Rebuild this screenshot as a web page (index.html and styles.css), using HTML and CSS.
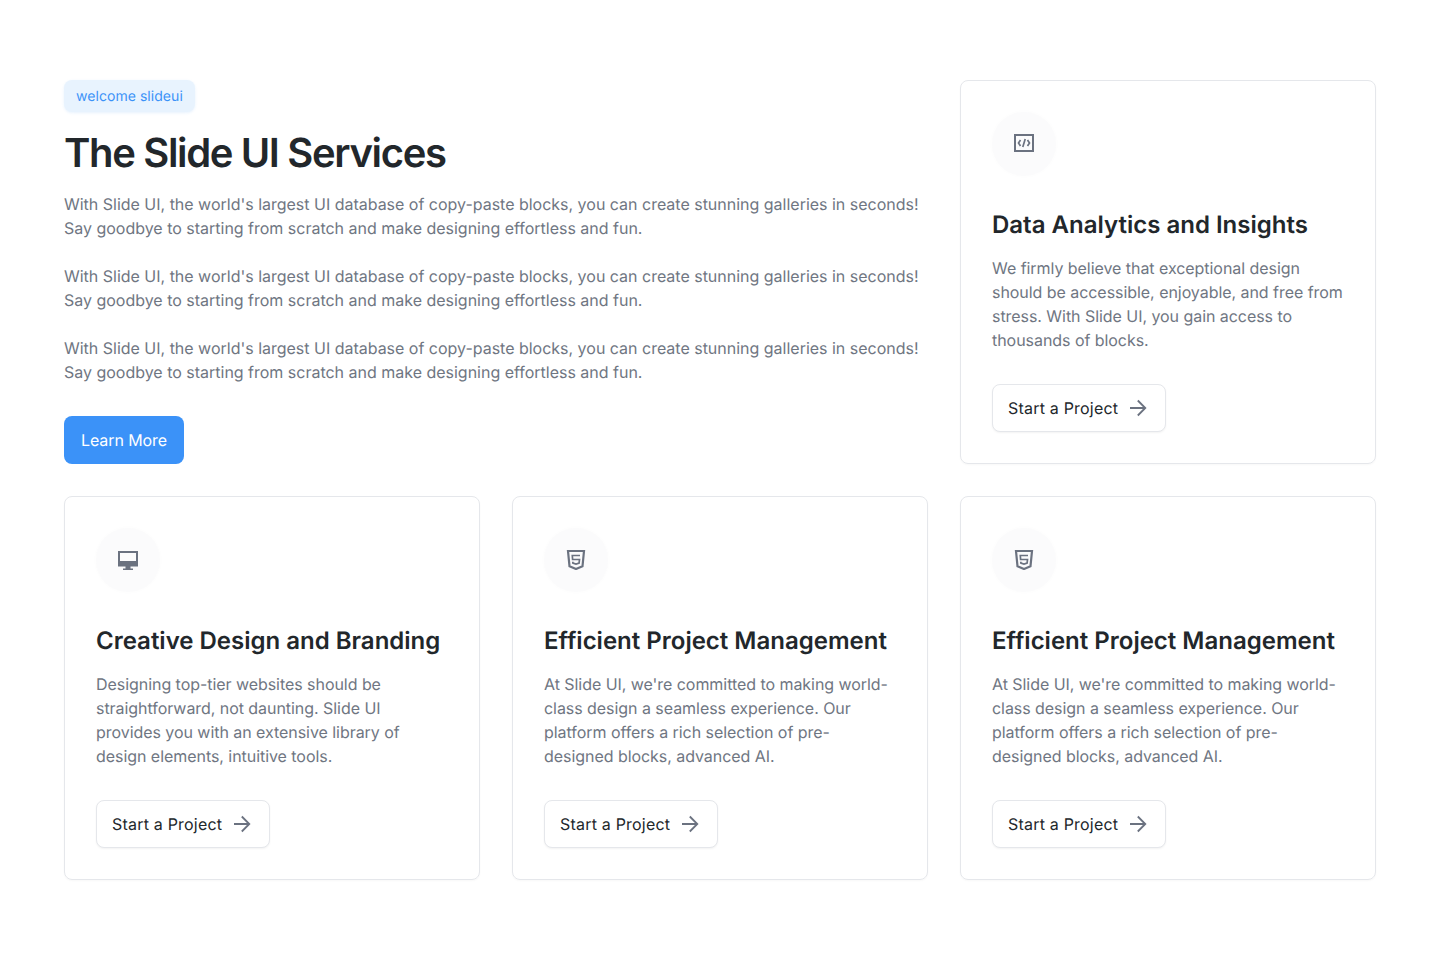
FILE: index.html
```html
<!DOCTYPE html>
<html lang="en">
<head>
    <meta charset="UTF-8">
    <meta name="viewport" content="width=device-width, initial-scale=1.0">
    <title>The Slide UI Services</title>
    <link rel="stylesheet" href="styles.css">
</head>
<body>
    <div class="services">
        <div class="intro">
            <span class="badge">welcome slideui</span>
            <h1>The Slide UI Services</h1>
            <p>With Slide UI, the world's largest UI database of copy-paste blocks, you can create stunning galleries in seconds! Say goodbye to starting from scratch and make designing effortless and fun.</p>
            <p>With Slide UI, the world's largest UI database of copy-paste blocks, you can create stunning galleries in seconds! Say goodbye to starting from scratch and make designing effortless and fun.</p>
            <p>With Slide UI, the world's largest UI database of copy-paste blocks, you can create stunning galleries in seconds! Say goodbye to starting from scratch and make designing effortless and fun.</p>
            <a href="#" class="btn-primary">Learn More</a>
        </div>

        <div class="card">
            <div class="card-icon">
                <svg width="20" height="20" viewBox="0 0 20 20" fill="none">
                    <rect x="1" y="1" width="18" height="16" stroke="#6b7280" stroke-width="2"/>
                    <path d="M6.500 6 4.500 9l2 3M13.500 6l2 3-2 3M11.200 5l-2.400 8" stroke="#6b7280" stroke-width="1.700"/>
                </svg>
            </div>
            <h2>Data Analytics and Insights</h2>
            <p>We firmly believe that exceptional design should be accessible, enjoyable, and free from stress. With Slide UI, you gain access to thousands of blocks.</p>
            <a href="#" class="btn-outline"><span>Start a Project</span>
                <svg width="24" height="24" viewBox="0 0 24 24" fill="none"><path d="M4 12h15M11.800 4.500 19.300 12l-7.500 7.500" stroke="#6b7280" stroke-width="1.800"/></svg>
            </a>
        </div>

        <div class="card">
            <div class="card-icon">
                <svg width="20" height="20" viewBox="0 0 20 20" fill="none">
                    <path fill-rule="evenodd" clip-rule="evenodd" d="M0 1h20v15.500h-7.500v2H15V20H5v-1.500h2.500v-2H0V1Zm2 2v8h16V3H2Z" fill="#6b7280"/>
                </svg>
            </div>
            <h2>Creative Design and Branding</h2>
            <p>Designing top-tier websites should be straightforward, not daunting. Slide UI provides you with an extensive library of design elements, intuitive tools.</p>
            <a href="#" class="btn-outline"><span>Start a Project</span>
                <svg width="24" height="24" viewBox="0 0 24 24" fill="none"><path d="M4 12h15M11.800 4.500 19.300 12l-7.500 7.500" stroke="#6b7280" stroke-width="1.800"/></svg>
            </a>
        </div>

        <div class="card">
            <div class="card-icon">
                <svg width="20" height="20" viewBox="0 0 20 20" fill="none">
                    <path d="M2 1h16l-1.500 15.300L10 19l-6.500-2.700L2 1Z" stroke="#6b7280" stroke-width="2.200"/>
                    <path d="M14 5.500H6.300l.3 4h6.900l-.4 3.500L10 14l-3.100-1-.1-1.200" stroke="#6b7280" stroke-width="1.700"/>
                </svg>
            </div>
            <h2>Efficient Project Management</h2>
            <p>At Slide UI, we're committed to making world-class design a seamless experience. Our platform offers a rich selection of pre-designed blocks, advanced AI.</p>
            <a href="#" class="btn-outline"><span>Start a Project</span>
                <svg width="24" height="24" viewBox="0 0 24 24" fill="none"><path d="M4 12h15M11.800 4.500 19.300 12l-7.500 7.500" stroke="#6b7280" stroke-width="1.800"/></svg>
            </a>
        </div>

        <div class="card">
            <div class="card-icon">
                <svg width="20" height="20" viewBox="0 0 20 20" fill="none">
                    <path d="M2 1h16l-1.500 15.300L10 19l-6.500-2.700L2 1Z" stroke="#6b7280" stroke-width="2.200"/>
                    <path d="M14 5.500H6.300l.3 4h6.900l-.4 3.500L10 14l-3.100-1-.1-1.200" stroke="#6b7280" stroke-width="1.700"/>
                </svg>
            </div>
            <h2>Efficient Project Management</h2>
            <p>At Slide UI, we're committed to making world-class design a seamless experience. Our platform offers a rich selection of pre-designed blocks, advanced AI.</p>
            <a href="#" class="btn-outline"><span>Start a Project</span>
                <svg width="24" height="24" viewBox="0 0 24 24" fill="none"><path d="M4 12h15M11.800 4.500 19.300 12l-7.500 7.500" stroke="#6b7280" stroke-width="1.800"/></svg>
            </a>
        </div>
    </div>
</body>
</html>
```

FILE: styles.css
```css
body {
    font-family: Inter, "Noto Sans", sans-serif;
    margin: 0;
    background-color: white;
    text-rendering: geometricPrecision;
}
.services {
    display: grid;
    grid-template-columns: repeat(3, 1fr);
    gap: 32px;
    padding: 80px 64px;
}
.intro {
    grid-column: span 2;
    display: flex;
    flex-direction: column;
    align-items: flex-start;
}
.intro p {
    margin: 0 0 24px;
    font-size: 16px;
    line-height: 24px;
    letter-spacing: -0.01px;
    color: #6f7682;
}
.intro p:last-of-type {
    margin-bottom: 32px;
}
.badge {
    padding: 5px 12px 3px;
    font-size: 14px;
    line-height: 24px;
    letter-spacing: 0.05px;
    color: #3b92f8;
    background-color: #e8f3fe;
    border-radius: 8px;
    box-shadow: 0 1px 3px rgba(59, 146, 248, 0.12);
}
h1 {
    margin: 17px 0 15px;
    font-size: 40px;
    line-height: 48px;
    font-weight: 600;
    letter-spacing: -1.35px;
    color: #22272b;
}
.btn-primary {
    padding: 12px 17px;
    font-size: 16px;
    line-height: 24px;
    letter-spacing: -0.1px;
    color: white;
    background-color: #3b92f8;
    border-radius: 8px;
    text-decoration: none;
}
.card {
    padding: 31px;
    border: 1px solid #e5e7eb;
    border-radius: 8px;
    box-shadow: 0 1px 2px rgba(0, 0, 0, 0.03);
}
.card-icon {
    display: flex;
    align-items: center;
    justify-content: center;
    width: 64px;
    height: 64px;
    margin-bottom: 33px;
    background-color: #fbfbfc;
    border-radius: 50%;
    box-shadow: 0 0 4px rgba(0, 0, 0, 0.02);
}
h2 {
    margin: 0 0 15px;
    font-size: 24px;
    line-height: 32px;
    font-weight: 600;
    color: #22272b;
}
.card p {
    margin: 0 0 32px;
    font-size: 16px;
    line-height: 24px;
    letter-spacing: -0.05px;
    color: #6f7682;
}
.btn-outline {
    display: inline-flex;
    align-items: center;
    gap: 8px;
    padding: 11px 15px;
    font-size: 16px;
    line-height: 24px;
    letter-spacing: 0.2px;
    color: #22272b;
    background-color: white;
    border: 1px solid #e5e7eb;
    border-radius: 8px;
    box-shadow: 0 1px 2px rgba(0, 0, 0, 0.05);
    text-decoration: none;
}
```
